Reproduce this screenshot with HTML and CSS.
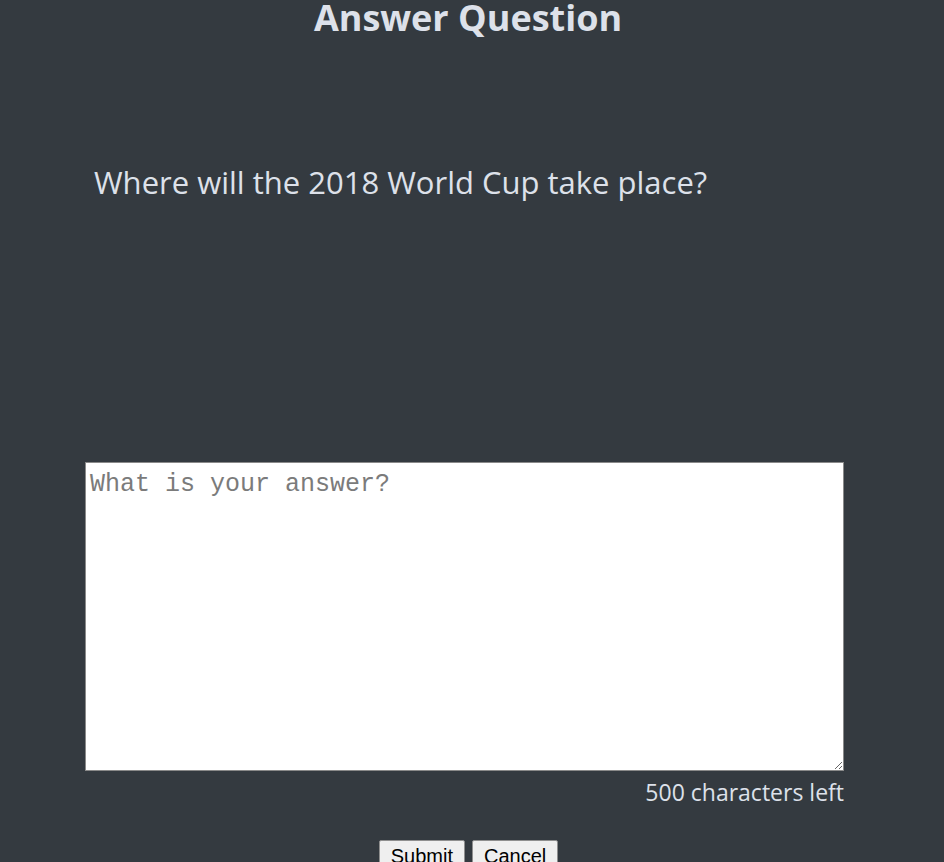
FILE: index.html
```html
<!DOCTYPE html>
<html>
<head>
<meta charset="utf-8">
<title>Answer Question</title>
<link rel="stylesheet" href="styles.css">
</head>
<body>
<div class="page">
  <h1 class="title">Answer Question</h1>
  <div class="content">
    <p class="question">Where will the 2018 World Cup take place?</p>
    <textarea class="answer" placeholder="What is your answer?"></textarea>
    <div class="counter">500 characters left</div>
    <div class="actions">
      <button class="btn">Submit</button>
      <button class="btn">Cancel</button>
    </div>
  </div>
</div>
</body>
</html>
```
FILE: styles.css
```css
html, body {
  margin: 0;
  padding: 0;
  background: #343a40;
}
.page {
  width: 936px;
  font-family: "Open Sans", "Noto Sans", sans-serif;
  color: #dde1ea;
}
.title {
  margin: 0;
  text-align: center;
  font-size: 36px;
  font-weight: 700;
  line-height: 36px;
}
.content {
  width: 759px;
  margin-left: 85px;
}
.question {
  margin: 126px 0 0 9px;
  font-size: 31px;
  line-height: 40px;
  font-weight: 400;
}
.answer {
  display: block;
  box-sizing: border-box;
  width: 759px;
  height: 309px;
  margin-top: 260px;
  border: 1px solid #8a8a8a;
  background: #fff;
  padding: 5px 4px;
  font-family: "Liberation Mono", monospace;
  font-size: 25px;
  line-height: 34px;
  color: #222;
}
.answer::placeholder {
  color: #7b7b7b;
}
.counter {
  text-align: right;
  font-size: 23px;
  line-height: 42px;
}
.actions {
  display: flex;
  justify-content: center;
  gap: 7px;
  margin-top: 27px;
  padding-left: 8px;
}
.btn {
  font-family: "Liberation Sans", Arial, sans-serif;
  font-size: 20px;
  padding: 4px 11px;
  background: #efefef;
  border: 1px solid #8f8f8f;
  border-radius: 2px;
  color: #000;
}
```
